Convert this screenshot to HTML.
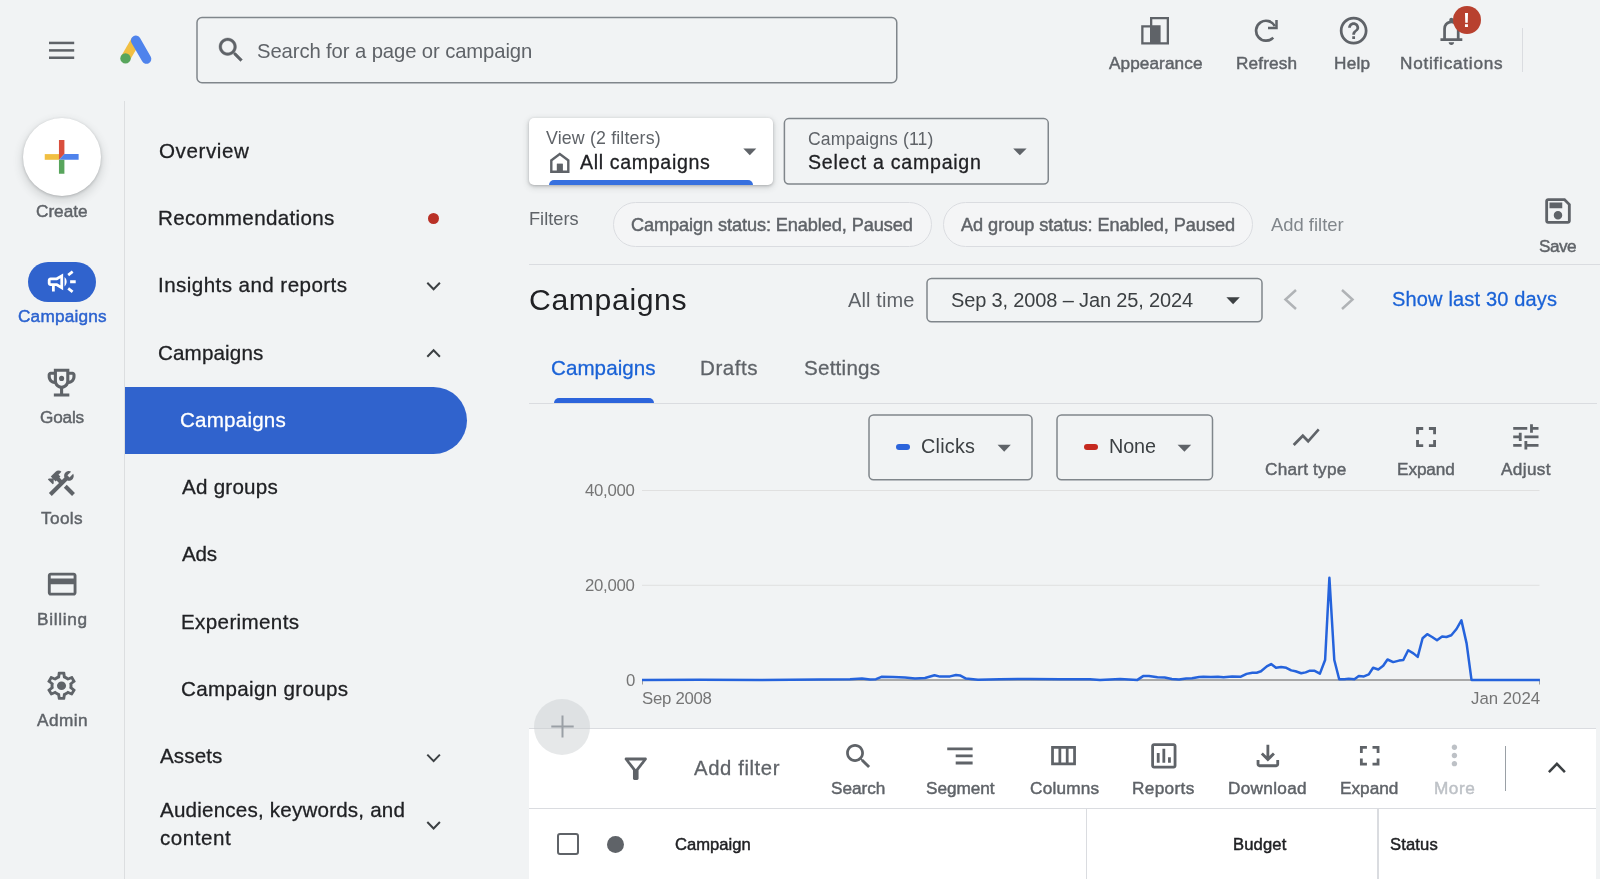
<!DOCTYPE html>
<html lang="en">
<head>
<meta charset="utf-8">
<title>Campaigns - Google Ads</title>
<style>
html,body{margin:0;padding:0}
body{position:relative;width:1600px;height:879px;overflow:hidden;background:#f1f3f4;font-family:"Liberation Sans",Arial,sans-serif;color:#202124}
*{box-sizing:border-box}
.t{position:absolute;white-space:nowrap;display:block;will-change:transform}
.m{-webkit-text-stroke:0.45px currentColor}
.g{-webkit-text-stroke:0.28px currentColor}
.b{font-weight:bold}
.a{position:absolute}
svg{position:absolute;overflow:visible}
.box{position:absolute;border:1px solid #80868b;border-radius:5px}
.chip{position:absolute;border:1px solid #dadce0;border-radius:23px;background:#f4f5f6}
.hl{position:absolute;height:1px;background:#dadce0}
.vl{position:absolute;width:1px;background:#dadce0}
</style>
</head>
<body>

<!-- ===== top bar ===== -->
<header>
  <svg style="left:0;top:0;width:1600px;height:879px" viewBox="0 0 1600 879" ><rect x="49" y="41.7" width="25.2" height="2.5" fill="#5f6368"/><rect x="49" y="49.15" width="25.2" height="2.5" fill="#5f6368"/><rect x="49" y="56.5" width="25.2" height="2.5" fill="#5f6368"/></svg>
  <svg style="left:0;top:0;width:1600px;height:879px" viewBox="0 0 1600 879" fill="none"><path d="M125.4 58.4L135.8 40.5" stroke="#f1bf42" stroke-width="9.6" stroke-linecap="butt"/><path d="M135.8 40.5L146.4 58.9" stroke="#4f83ec" stroke-width="9.8" stroke-linecap="round"/><circle cx="125.5" cy="58.4" r="5.2" fill="#58a55c"/></svg>
  <svg style="left:0;top:0;width:1600px;height:879px" viewBox="0 0 1600 879" fill="none" stroke="#80868b" stroke-width="1.5"><rect x="197" y="17.55" width="699.75" height="65.2" rx="5"/></svg>
  <svg style="left:214.95px;top:34.10px;width:32.18px;height:32.18px" viewBox="0 0 24 24" fill="#5f6368"><path stroke="#5f6368" stroke-width="0.3" d="M15.5 14h-.79l-.28-.27C15.41 12.59 16 11.11 16 9.5 16 5.91 13.09 3 9.5 3S3 5.91 3 9.5 5.91 16 9.5 16c1.61 0 3.09-.59 4.23-1.57l.27.28v.79l5 4.99L20.49 19l-4.99-5zm-6 0C7.01 14 5 11.99 5 9.5S7.01 5 9.5 5 14 7.01 14 9.5 11.99 14 9.5 14z"/></svg>
  <span class="t" style="left:257.00px;top:40px;font-size:20.3px;line-height:23px;letter-spacing:-0.114px;color:#5f6368">Search for a page or campaign</span>
  <svg style="left:0;top:0;width:1600px;height:879px" viewBox="0 0 1600 879" ><path fill-rule="evenodd" fill="#5f6368" d="M1141.2 25.2H1150V17H1169V44.5H1141.2zM1143.5 27.5V42.2H1150V27.5zM1152.3 19.3H1166.7V42.2H1160.6V25.2H1152.3z"/></svg>
  <svg style="left:0;top:0;width:1600px;height:879px" viewBox="0 0 1600 879" ><path d="M1274.92 26.23A9.95 9.95 0 1 0 1273.21 37.66" stroke="#5f6368" stroke-width="2.7" fill="none"/><path d="M1276.5 19.9V28H1268" stroke="#5f6368" stroke-width="2.5" fill="none"/></svg>
  <svg style="left:1336.85px;top:14.10px;width:33.30px;height:33.30px" viewBox="0 0 24 24" fill="#5f6368"><path d="M11 18h2v-2h-2v2zm1-16C6.48 2 2 6.48 2 12s4.48 10 10 10 10-4.48 10-10S17.52 2 12 2zm0 18c-4.41 0-8-3.59-8-8s3.59-8 8-8 8 3.59 8 8-3.59 8-8 8zm0-14c-2.21 0-4 1.79-4 4h2c0-1.1.9-2 2-2s2 .9 2 2c0 2-3 1.75-3 5h2c0-2.25 3-2.5 3-5 0-2.21-1.79-4-4-4z"/></svg>
  <svg style="left:1434.86px;top:14.86px;width:32.78px;height:32.78px" viewBox="0 0 24 24" fill="#5f6368"><path d="M4 19v-2h2v-7q0-2.075 1.25-3.687T10.5 4.2v-.7q0-.625.438-1.062T12 2q.625 0 1.063.438T13.5 3.5v.7q2 .5 3.25 2.113T18 10v7h2v2H4zm8 3q-.825 0-1.412-.587T10 20h4q0 .825-.587 1.413T12 22zm-4-5h8v-7q0-1.65-1.175-2.825T12 6q-1.65 0-2.825 1.175T8 10v7z"/></svg>
  <div class="a" style="left:1452.8px;top:5.5px;width:28px;height:28px;border-radius:50%;background:#b8412f"></div>
  <span class="t b" style="left:1463.1px;top:8.5px;font-size:21px;line-height:22px;color:#fff">!</span>
  <span class="t m" style="left:1108.60px;top:53px;font-size:17.2px;line-height:20px;letter-spacing:0.085px;color:#5f6368">Appearance</span><span class="t m" style="left:1235.60px;top:53px;font-size:17.2px;line-height:20px;letter-spacing:0.130px;color:#5f6368">Refresh</span><span class="t m" style="left:1334.40px;top:53px;font-size:17.2px;line-height:20px;letter-spacing:0.270px;color:#5f6368">Help</span><span class="t m" style="left:1399.80px;top:53px;font-size:17.2px;line-height:20px;letter-spacing:0.748px;color:#5f6368">Notifications</span>
  <div class="vl" style="left:1521.5px;top:28px;height:44px"></div>
</header>

<!-- ===== left rail ===== -->
<nav>
  <div class="vl" style="left:124px;top:101px;height:778px;background:#dcdee0"></div>
  <div class="a" style="left:22.5px;top:117.7px;width:78.8px;height:78.8px;border-radius:50%;background:#fff;box-shadow:0 1px 3px rgba(60,64,67,.28),0 4px 8px 2px rgba(60,64,67,.14)"></div>
  <svg style="left:0;top:0;width:1600px;height:879px" viewBox="0 0 1600 879" ><rect x="44.75" y="154.1" width="14.3" height="5.7" fill="#f1bf42"/><path d="M58.95 140H64.4V154.1L58.95 159.8z" fill="#d94f3d"/><path d="M64.4 154.1H78.6V159.8H58.95z" fill="#4f83ec"/><rect x="58.95" y="159.8" width="5.45" height="13.95" fill="#58a55c"/></svg>
  <span class="t m" style="left:36.00px;top:201px;font-size:17.2px;line-height:20px;letter-spacing:-0.006px;color:#5f6368">Create</span>
  <div class="a" style="left:28px;top:262px;width:67.5px;height:39.5px;border-radius:20px;background:#3063cd"></div>
  <svg style="left:44.90px;top:265.00px;width:33.50px;height:33.50px" viewBox="0 0 24 24" fill="#fff"><path d="M18 11v2h4v-2h-4zm-2 6.61c.96.71 2.21 1.65 3.2 2.39.4-.53.8-1.07 1.2-1.6-.99-.74-2.24-1.68-3.2-2.4-.4.54-.8 1.08-1.2 1.61zM20.4 5.6c-.4-.53-.8-1.07-1.2-1.6-.99.74-2.24 1.68-3.2 2.4.4.53.8 1.07 1.2 1.6.96-.72 2.21-1.65 3.2-2.4zM4 9c-1.1 0-2 .9-2 2v2c0 1.1.9 2 2 2h1v4h2v-4h1l5 3V6L8 9H4zm5.03 1.71L11 9.53v4.94l-1.97-1.18-.48-.29H4v-2h4.55l.48-.29zM15.5 12c0-1.33-.58-2.53-1.5-3.35v6.69c.92-.81 1.5-2.01 1.5-3.34z"/></svg>
  <svg style="left:43.15px;top:364.25px;width:37.20px;height:37.20px" viewBox="0 0 24 24" fill="#5f6368"><path d="M19 5h-2V3H7v2H5c-1.1 0-2 .9-2 2v1c0 2.55 1.92 4.63 4.39 4.94.63 1.5 1.98 2.63 3.61 2.96V19H7v2h10v-2h-4v-3.1c1.63-.33 2.98-1.46 3.61-2.96C19.08 12.63 21 10.55 21 8V7c0-1.1-.9-2-2-2zM5 8V7h2v3.82C5.84 10.4 5 9.3 5 8zm7 6c-1.65 0-3-1.35-3-3V5h6v6c0 1.65-1.35 3-3 3zm7-6c0 1.3-.84 2.4-2 2.82V7h2v1z"/><circle cx="12" cy="9.3" r="1.65"/></svg>
  <svg style="left:45.09px;top:467.48px;width:32.82px;height:32.82px" viewBox="0 0 24 24" fill="#5f6368"><path d="M13.783 15.172l2.121-2.121 5.996 5.996-2.121 2.121zM17.5 10c1.93 0 3.5-1.57 3.5-3.5 0-.58-.16-1.12-.41-1.6l-2.7 2.7-1.49-1.49 2.7-2.7c-.48-.25-1.02-.41-1.6-.41C15.57 3 14 4.57 14 6.5c0 .41.08.8.21 1.16l-1.85 1.85-1.78-1.78.71-.71-1.41-1.41L12 3.49c-1.17-1.17-3.07-1.17-4.24 0L4.22 7.03l1.41 1.41H2.81l-.71.71 3.54 3.54.71-.71V9.15l1.41 1.41.71-.71 1.78 1.78-7.41 7.41 2.12 2.12L16.34 9.79c.36.13.75.21 1.16.21z"/></svg>
  <svg style="left:44.58px;top:567.33px;width:34.35px;height:34.35px" viewBox="0 0 24 24" fill="#5f6368"><path d="M20 4H4c-1.11 0-1.99.89-1.99 2L2 18c0 1.11.89 2 2 2h16c1.11 0 2-.89 2-2V6c0-1.11-.89-2-2-2zm0 14H4v-6h16v6zm0-10H4V6h16v2z"/></svg>
  <svg style="left:44.12px;top:668.81px;width:35.06px;height:33.48px" viewBox="0 0 24 24" preserveAspectRatio="none" fill="#5f6368"><path d="M19.43 12.98c.04-.32.07-.64.07-.98 0-.34-.03-.66-.07-.98l2.11-1.65c.19-.15.24-.42.12-.64l-2-3.46c-.09-.16-.26-.25-.44-.25-.06 0-.12.01-.17.03l-2.49 1c-.52-.4-1.08-.73-1.69-.98l-.38-2.65C14.46 2.18 14.25 2 14 2h-4c-.25 0-.46.18-.49.42l-.38 2.65c-.61.25-1.17.59-1.69.98l-2.49-1c-.06-.02-.12-.03-.18-.03-.17 0-.34.09-.43.25l-2 3.46c-.13.22-.07.49.12.64l2.11 1.65c-.04.32-.07.65-.07.98 0 .33.03.66.07.98l-2.11 1.65c-.19.15-.24.42-.12.64l2 3.46c.09.16.26.25.44.25.06 0 .12-.01.17-.03l2.49-1c.52.4 1.08.73 1.69.98l.38 2.65c.03.24.24.42.49.42h4c.25 0 .46-.18.49-.42l.38-2.65c.61-.25 1.17-.59 1.69-.98l2.49 1c.06.02.12.03.18.03.17 0 .34-.09.43-.25l2-3.46c.12-.22.07-.49-.12-.64l-2.11-1.65zm-1.98-1.71c.04.31.05.52.05.73 0 .21-.02.43-.05.73l-.14 1.13.89.7 1.08.84-.7 1.21-1.27-.51-1.04-.42-.9.68c-.43.32-.84.56-1.25.73l-1.06.43-.16 1.13-.2 1.35h-1.4l-.19-1.35-.16-1.13-1.06-.43c-.43-.18-.83-.41-1.23-.71l-.91-.7-1.06.43-1.27.51-.7-1.21 1.08-.84.89-.7-.14-1.13c-.03-.31-.05-.54-.05-.74s.02-.43.05-.73l.14-1.13-.89-.7-1.08-.84.7-1.21 1.27.51 1.04.42.9-.68c.43-.32.84-.56 1.25-.73l1.06-.43.16-1.13.2-1.35h1.39l.19 1.35.16 1.13 1.06.43c.43.18.83.41 1.23.71l.91.7 1.06-.43 1.27-.51.7 1.21-1.07.85-.89.7.14 1.13z"/><circle cx="12" cy="12" r="3.1"/></svg>
  <span class="t m" style="left:17.50px;top:306px;font-size:17.2px;line-height:20px;letter-spacing:0.207px;color:#2b62cf">Campaigns</span><span class="t m" style="left:39.50px;top:407px;font-size:17.2px;line-height:20px;letter-spacing:-0.201px;color:#5f6368">Goals</span><span class="t m" style="left:41.00px;top:508px;font-size:17.2px;line-height:20px;letter-spacing:0.368px;color:#5f6368">Tools</span><span class="t m" style="left:36.50px;top:609px;font-size:17.2px;line-height:20px;letter-spacing:0.701px;color:#5f6368">Billing</span><span class="t m" style="left:36.50px;top:710px;font-size:17.2px;line-height:20px;letter-spacing:0.460px;color:#5f6368">Admin</span>
</nav>

<!-- ===== secondary nav ===== -->
<nav>
  <span class="t g" style="left:159.25px;top:139px;font-size:20.6px;line-height:24px;letter-spacing:0.578px;color:#202124">Overview</span>
  <span class="t g" style="left:158.25px;top:206px;font-size:20.6px;line-height:24px;letter-spacing:0.328px;color:#202124">Recommendations</span>
  <div class="a" style="left:428px;top:213.2px;width:11.2px;height:11.2px;border-radius:50%;background:#b93026"></div>
  <span class="t g" style="left:158.25px;top:273px;font-size:20.6px;line-height:24px;letter-spacing:0.430px;color:#202124">Insights and reports</span>
  <span class="t g" style="left:158.25px;top:341px;font-size:20.6px;line-height:24px;letter-spacing:0.141px;color:#202124">Campaigns</span>
  <div class="a" style="left:125px;top:387px;width:342px;height:67px;border-radius:0 34px 34px 0;background:#3063cd"></div>
  <span class="t g" style="left:180.25px;top:408px;font-size:20.6px;line-height:24px;letter-spacing:0.204px;color:#ffffff">Campaigns</span>
  <span class="t g" style="left:181.50px;top:475px;font-size:20.6px;line-height:24px;letter-spacing:0.240px;color:#202124">Ad groups</span>
  <span class="t g" style="left:181.50px;top:542px;font-size:20.6px;line-height:24px;letter-spacing:-0.220px;color:#202124">Ads</span>
  <span class="t g" style="left:180.50px;top:610px;font-size:20.6px;line-height:24px;letter-spacing:0.359px;color:#202124">Experiments</span>
  <span class="t g" style="left:180.60px;top:677px;font-size:20.6px;line-height:24px;letter-spacing:0.324px;color:#202124">Campaign groups</span>
  <span class="t g" style="left:159.50px;top:744px;font-size:20.6px;line-height:24px;letter-spacing:0.099px;color:#202124">Assets</span>
  <span class="t g" style="left:159.50px;top:798px;font-size:20.6px;line-height:24px;letter-spacing:0.198px;color:#202124">Audiences, keywords, and</span>
  <span class="t g" style="left:159.50px;top:826px;font-size:20.6px;line-height:24px;letter-spacing:0.545px;color:#202124">content</span>
  <svg style="left:0;top:0;width:1600px;height:879px" viewBox="0 0 1600 879" ><path d="M427.3 282.8L433.6 289.3L439.90000000000003 282.8" stroke="#3c4043" stroke-width="2" fill="none"/><path d="M427.3 356.8L433.6 350.3L439.90000000000003 356.8" stroke="#3c4043" stroke-width="2" fill="none"/><path d="M427.3 754.6L433.6 761.1L439.90000000000003 754.6" stroke="#3c4043" stroke-width="2" fill="none"/><path d="M427.3 822L433.6 828.5L439.90000000000003 822" stroke="#3c4043" stroke-width="2" fill="none"/></svg>
</nav>

<!-- ===== main ===== -->
<main>
  <svg style="left:0;top:0;width:1600px;height:879px" viewBox="0 0 1600 879" fill="none" stroke="#80868b" stroke-width="1.5">
    <rect x="784.4" y="118.6" width="263.85" height="65.5" rx="4.5"/>
    <rect x="927" y="278.4" width="335" height="43.3" rx="4.5"/>
    <rect x="869" y="415" width="163" height="64.8" rx="4.5"/>
    <rect x="1057" y="415" width="155.5" height="64.8" rx="4.5"/>
  </svg>
  <div class="a" style="left:529px;top:118px;width:243.5px;height:67px;border-radius:5px;background:#fff;box-shadow:0 1px 3px rgba(60,64,67,.3),0 2px 6px 1px rgba(60,64,67,.15);overflow:hidden">
    <div class="a" style="left:19.5px;top:61.5px;width:204.5px;height:10px;border-radius:5px 5px 0 0;background:#3670df"></div>
  </div>
  <svg style="left:0;top:0;width:1600px;height:879px" viewBox="0 0 1600 879" ><path fill-rule="evenodd" fill="#5f6368" d="M550.1 172.9V159.7L559.8 152.6L569.5 159.7V172.9zM552.5 170.6H556.9V163.8H562.7V170.6H567.1V160.9L559.8 155.6L552.5 160.9z"/><rect x="556.9" y="163.8" width="5.8" height="7.6" fill="#5f6368"/><path d="M743.3 148.6H756.3L749.8 155.3z" fill="#5f6368"/><path d="M1013.2 148.6H1026.6L1019.9 155.3z" fill="#5f6368"/><path d="M1226.4 297.3H1239.8L1233.1 304.2z" fill="#3c4043"/><path d="M997.6 444.8H1010.8L1004.2 451.7z" fill="#5f6368"/><path d="M1177.6 444.8H1191.2L1184.4 451.7z" fill="#5f6368"/><path d="M1296 290L1285.5 299.5L1296 309" stroke="#b0b3b6" stroke-width="2.5" fill="none"/><path d="M1342 290L1352.5 299.5L1342 309" stroke="#b0b3b6" stroke-width="2.5" fill="none"/></svg>
  <svg style="left:1540.80px;top:193.90px;width:34.00px;height:34.00px" viewBox="0 0 24 24" fill="#5f6368"><path d="M17 3H5c-1.11 0-2 .9-2 2v14c0 1.1.89 2 2 2h14c1.1 0 2-.9 2-2V7l-4-4zm2 16H5V5h11.17L19 7.83V19zm-7-7c-1.66 0-3 1.34-3 3s1.34 3 3 3 3-1.34 3-3-1.34-3-3-3zM6 6h9v4H6z"/></svg>
  <svg style="left:1289.61px;top:420.56px;width:32.38px;height:32.38px" viewBox="0 0 24 24" fill="#5f6368"><path d="M3.5 18.49l6-6.01 4 4L22 6.92l-1.41-1.41-7.09 7.97-4-4L2 16.99z"/></svg>
  <svg style="left:1408.94px;top:419.84px;width:34.11px;height:34.11px" viewBox="0 0 24 24" fill="#5f6368"><path d="M7 14H5v5h5v-2H7v-3zm-2-4h2V7h3V5H5v5zm12 7h-3v2h5v-5h-2v3zM14 5v2h3v3h2V5h-5z"/></svg>
  <svg style="left:1508.58px;top:419.78px;width:33.73px;height:33.73px" viewBox="0 0 24 24" fill="#5f6368"><path d="M3 17v2h6v-2H3zM3 5v2h10V5H3zm10 16v-2h8v-2h-8v-2h-2v6h2zM7 9v2H3v2h4v2h2V9H7zm14 4v-2H11v2h10zm-6-4h2V7h4V5h-4V3h-2v6z"/></svg>
  <span class="t" style="left:546.25px;top:128px;font-size:17.8px;line-height:20px;letter-spacing:0.157px;color:#5f6368">View (2 filters)</span>
  <span class="t g" style="left:580.00px;top:151px;font-size:19.6px;line-height:23px;letter-spacing:0.652px;color:#202124">All campaigns</span>
  <span class="t" style="left:807.50px;top:129px;font-size:17.6px;line-height:20px;letter-spacing:0.115px;color:#5f6368">Campaigns (11)</span>
  <span class="t g" style="left:807.50px;top:151px;font-size:19.6px;line-height:23px;letter-spacing:0.731px;color:#202124">Select a campaign</span>

  <span class="t" style="left:528.50px;top:209px;font-size:18.2px;line-height:21px;letter-spacing:0.014px;color:#5f6368">Filters</span>
  <div class="chip" style="left:613px;top:202px;width:318.5px;height:44.5px"></div>
  <span class="t m" style="left:631.25px;top:215px;font-size:18.2px;line-height:21px;letter-spacing:-0.105px;color:#5f6368">Campaign status: Enabled, Paused</span>
  <div class="chip" style="left:943px;top:202px;width:309.5px;height:44.5px"></div>
  <span class="t m" style="left:961.25px;top:215px;font-size:18.2px;line-height:21px;letter-spacing:-0.062px;color:#5f6368">Ad group status: Enabled, Paused</span>
  <span class="t" style="left:1270.50px;top:214px;font-size:18.4px;line-height:21px;letter-spacing:0.005px;color:#80868b">Add filter</span>
  <span class="t m" style="left:1538.75px;top:236px;font-size:17.2px;line-height:20px;letter-spacing:-0.539px;color:#5f6368">Save</span>
  <div class="hl" style="left:529px;top:264px;width:1071px"></div>

  <span class="t" style="left:528.50px;top:282px;font-size:30.2px;line-height:35px;letter-spacing:0.613px;color:#202124">Campaigns</span>
  <span class="t" style="left:847.50px;top:289px;font-size:20px;line-height:23px;letter-spacing:0.115px;color:#5f6368">All time</span>
  <span class="t" style="left:950.50px;top:289px;font-size:20px;line-height:23px;letter-spacing:-0.146px;color:#3c4043">Sep 3, 2008 – Jan 25, 2024</span>
  <span class="t g" style="left:1392.00px;top:288px;font-size:20px;line-height:23px;letter-spacing:0.168px;color:#1a62d6">Show last 30 days</span>

  <span class="t g" style="left:550.75px;top:356px;font-size:20.6px;line-height:24px;letter-spacing:0.048px;color:#1a62d6">Campaigns</span><span class="t g" style="left:700.25px;top:356px;font-size:20.6px;line-height:24px;letter-spacing:0.525px;color:#5f6368">Drafts</span><span class="t g" style="left:803.75px;top:356px;font-size:20.6px;line-height:24px;letter-spacing:0.234px;color:#5f6368">Settings</span>
  <div class="a" style="left:554px;top:398px;width:99.5px;height:5px;border-radius:5px 5px 0 0;background:#2c64db"></div>
  <div class="hl" style="left:529px;top:402.5px;width:1068px"></div>
  <div class="a" style="left:896px;top:444px;width:14px;height:6px;border-radius:3px;background:#2c64db"></div>
  <span class="t" style="left:921.00px;top:435px;font-size:19.8px;line-height:23px;letter-spacing:0.229px;color:#3c4043">Clicks</span>
  <div class="a" style="left:1083.5px;top:444px;width:14px;height:6px;border-radius:3px;background:#c5291f"></div>
  <span class="t" style="left:1108.50px;top:435px;font-size:19.8px;line-height:23px;letter-spacing:-0.096px;color:#3c4043">None</span>
  <span class="t m" style="left:1265.20px;top:459px;font-size:17.2px;line-height:20px;letter-spacing:0.219px;color:#5f6368">Chart type</span><span class="t m" style="left:1396.70px;top:459px;font-size:17.2px;line-height:20px;letter-spacing:-0.087px;color:#5f6368">Expand</span><span class="t m" style="left:1500.60px;top:459px;font-size:17.2px;line-height:20px;letter-spacing:0.361px;color:#5f6368">Adjust</span>

  <svg style="left:0;top:0;width:1600px;height:879px" viewBox="0 0 1600 879" fill="none"><path d="M642 490.5H1539.5M642 585.3H1539.5" stroke="#e0e0e0" stroke-width="1"/><path d="M642 680H1539.5" stroke="#8f8f8f" stroke-width="1.3"/><path d="M642.5 680V684.5M1539.5 680V684.5" stroke="#9e9e9e" stroke-width="1"/><path d="M642.0 680.0L700.0 679.8L760.0 679.9L820.0 679.6L850.0 679.2L862.0 678.6L870.0 679.6L876.0 679.2L881.5 676.8L893.0 677.0L905.0 677.6L915.0 678.4L925.0 678.0L934.5 675.2L940.0 676.6L950.0 676.4L956.0 675.0L960.0 675.4L966.0 678.6L978.0 679.8L1000.0 679.2L1030.0 679.0L1060.0 679.3L1090.0 679.2L1100.0 679.9L1120.1 679.0L1137.4 679.9L1143.1 676.1L1148.9 675.9L1157.5 677.3L1164.7 677.6L1171.9 679.0L1179.1 679.6L1186.2 678.5L1192.0 678.2L1199.2 677.0L1203.5 676.7L1210.7 677.0L1217.9 676.7L1223.6 677.3L1232.2 676.4L1240.9 676.7L1246.6 673.9L1252.4 672.7L1256.7 672.7L1261.0 671.3L1266.8 666.4L1271.1 664.1L1276.0 667.8L1281.1 667.0L1286.3 667.8L1291.2 670.4L1295.5 671.3L1301.2 673.3L1305.6 672.4L1309.9 670.7L1314.2 670.7L1319.9 673.6L1325.1 660.0L1329.4 577.8L1334.3 660.0L1339.2 679.3L1344.4 679.3L1348.7 678.7L1354.4 679.3L1358.8 676.1L1363.9 676.4L1368.8 674.4L1373.1 667.8L1378.3 669.5L1383.2 665.8L1387.5 659.5L1393.2 662.1L1399.0 660.6L1403.3 660.0L1408.2 650.3L1413.4 653.4L1417.7 656.9L1422.6 638.2L1427.2 634.2L1432.1 637.0L1437.0 640.2L1442.1 636.5L1446.4 637.0L1451.3 635.3L1456.5 629.0L1461.4 620.4L1466.6 643.4L1471.5 679.9L1539.9 679.9" stroke="#2563dc" stroke-width="2.5" stroke-linejoin="round" stroke-linecap="butt" fill="none"/></svg>
  <span class="t" style="left:585.00px;top:481px;font-size:16.8px;line-height:19px;letter-spacing:-0.299px;color:#757575">40,000</span><span class="t" style="left:585.00px;top:576px;font-size:16.8px;line-height:19px;letter-spacing:-0.299px;color:#757575">20,000</span><span class="t" style="left:626.25px;top:671px;font-size:16.8px;line-height:19px;letter-spacing:0.000px;color:#757575">0</span><span class="t" style="left:642.00px;top:689px;font-size:16.8px;line-height:19px;letter-spacing:-0.274px;color:#757575">Sep 2008</span><span class="t" style="left:1470.50px;top:689px;font-size:16.8px;line-height:19px;letter-spacing:0.005px;color:#757575">Jan 2024</span>

  <!-- table panel -->
  <div class="a" style="left:529px;top:728px;width:1067px;height:151px;background:#fff;border-top:1px solid #dadce0"></div>
  <div class="a" style="left:534.2px;top:698.6px;width:56.2px;height:56.2px;border-radius:50%;background:rgba(200,203,206,.45)"></div>
  <svg style="left:0;top:0;width:1600px;height:879px" viewBox="0 0 1600 879" ><path d="M551.3 726.5H573.7M562.5 715.4V737.6" stroke="#9aa0a6" stroke-width="2" fill="none"/><path d="M1548.9 772.2L1556.9 763.8L1564.9 772.2" stroke="#3c4043" stroke-width="2.5" fill="none"/></svg>
  <svg style="left:618.84px;top:751.97px;width:33.56px;height:33.56px" viewBox="0 0 24 24" fill="#5f6368"><path d="M7 6h10l-5.01 6.3L7 6zm-2.75-.39C6.27 8.2 10 13 10 13v6c0 .55.45 1 1 1h2c.55 0 1-.45 1-1v-6s3.72-4.8 5.74-7.39c.51-.66.04-1.61-.79-1.61H5.04c-.83 0-1.3.95-.79 1.61z"/></svg>
  <svg style="left:842.01px;top:739.76px;width:32.93px;height:32.93px" viewBox="0 0 24 24" fill="#5f6368"><path d="M15.5 14h-.79l-.28-.27C15.41 12.59 16 11.11 16 9.5 16 5.91 13.09 3 9.5 3S3 5.91 3 9.5 5.91 16 9.5 16c1.61 0 3.09-.59 4.23-1.57l.27.28v.79l5 4.99L20.49 19l-4.99-5zm-6 0C7.01 14 5 11.99 5 9.5S7.01 5 9.5 5 14 7.01 14 9.5 11.99 14 9.5 14z"/></svg>
  <svg style="left:943.44px;top:739.12px;width:33.87px;height:33.87px" viewBox="0 0 24 24" fill="#5f6368"><path d="M9 18h12v-2H9v2zM3 6v2h18V6H3zm6 7h12v-2H9v2z"/></svg>
  <svg style="left:1047.46px;top:739.09px;width:33.07px;height:33.07px" viewBox="0 0 24 24" fill="#5f6368"><path d="M3 5v14h18V5H3zm5.33 12H5V7h3.33v10zm5.34 0h-3.33V7h3.33v10zM19 17h-3.33V7H19v10z"/></svg>
  <svg style="left:1146.67px;top:738.92px;width:33.67px;height:33.67px" viewBox="0 0 24 24" fill="#5f6368"><path d="M9 17H7v-7h2v7zm4 0h-2V7h2v10zm4 0h-2v-4h2v4zm2 2H5V5h14v14zm0-16H5c-1.1 0-2 .9-2 2v14c0 1.1.9 2 2 2h14c1.1 0 2-.9 2-2V5c0-1.1-.9-2-2-2z"/></svg>
  <svg style="left:1251.03px;top:739.12px;width:33.75px;height:33.75px" viewBox="0 0 24 24" fill="#5f6368"><path d="M12 16l-5-5 1.4-1.45 2.6 2.6V4h2v8.15l2.6-2.6L17 11l-5 5zm-6 4q-.825 0-1.412-.587T4 18v-3h2v3h12v-3h2v3q0 .825-.587 1.413T18 20H6z"/></svg>
  <svg style="left:1352.66px;top:739.41px;width:33.43px;height:33.43px" viewBox="0 0 24 24" fill="#5f6368"><path d="M7 14H5v5h5v-2H7v-3zm-2-4h2V7h3V5H5v5zm12 7h-3v2h5v-5h-2v3zM14 5v2h3v3h2V5h-5z"/></svg>
  <svg style="left:1437.57px;top:739.47px;width:32.85px;height:32.85px" viewBox="0 0 24 24" fill="#bdc1c6"><path d="M12 8c1.1 0 2-.9 2-2s-.9-2-2-2-2 .9-2 2 .9 2 2 2zm0 2c-1.1 0-2 .9-2 2s.9 2 2 2 2-.9 2-2-.9-2-2-2zm0 6c-1.1 0-2 .9-2 2s.9 2 2 2 2-.9 2-2-.9-2-2-2z"/></svg>
  <span class="t g" style="left:694.25px;top:757px;font-size:20.3px;line-height:23px;letter-spacing:0.608px;color:#5f6368">Add filter</span>
  <span class="t m" style="left:831.25px;top:778px;font-size:17.2px;line-height:20px;letter-spacing:-0.030px;color:#5f6368">Search</span><span class="t m" style="left:925.75px;top:778px;font-size:17.2px;line-height:20px;letter-spacing:-0.044px;color:#5f6368">Segment</span><span class="t m" style="left:1029.50px;top:778px;font-size:17.2px;line-height:20px;letter-spacing:0.213px;color:#5f6368">Columns</span><span class="t m" style="left:1132.00px;top:778px;font-size:17.2px;line-height:20px;letter-spacing:0.360px;color:#5f6368">Reports</span><span class="t m" style="left:1227.75px;top:778px;font-size:17.2px;line-height:20px;letter-spacing:0.303px;color:#5f6368">Download</span><span class="t m" style="left:1339.75px;top:778px;font-size:17.2px;line-height:20px;letter-spacing:0.003px;color:#5f6368">Expand</span><span class="t m" style="left:1433.50px;top:778px;font-size:17.2px;line-height:20px;letter-spacing:0.550px;color:#bdc1c6">More</span>
  <div class="vl" style="left:1505px;top:746px;height:45px;background:#9aa0a6"></div>
  <div class="hl" style="left:529px;top:808px;width:1067px"></div>
  <div class="a" style="left:557px;top:833px;width:22px;height:22px;border:2px solid #5f6368;border-radius:3px"></div>
  <div class="a" style="left:607px;top:836px;width:17.2px;height:17.2px;border-radius:50%;background:#5f6368"></div>
  <span class="t m" style="left:675.00px;top:835px;font-size:16.6px;line-height:19px;letter-spacing:0.013px;color:#202124">Campaign</span>
  <div class="vl" style="left:1085.8px;top:809px;height:70px;width:1.5px"></div>
  <span class="t m" style="left:1233.25px;top:835px;font-size:16.6px;line-height:19px;letter-spacing:0.153px;color:#202124">Budget</span>
  <div class="vl" style="left:1377px;top:809px;height:70px;width:1.5px"></div>
  <span class="t m" style="left:1390.00px;top:835px;font-size:16.6px;line-height:19px;letter-spacing:0.151px;color:#202124">Status</span>
</main>
</body>
</html>
